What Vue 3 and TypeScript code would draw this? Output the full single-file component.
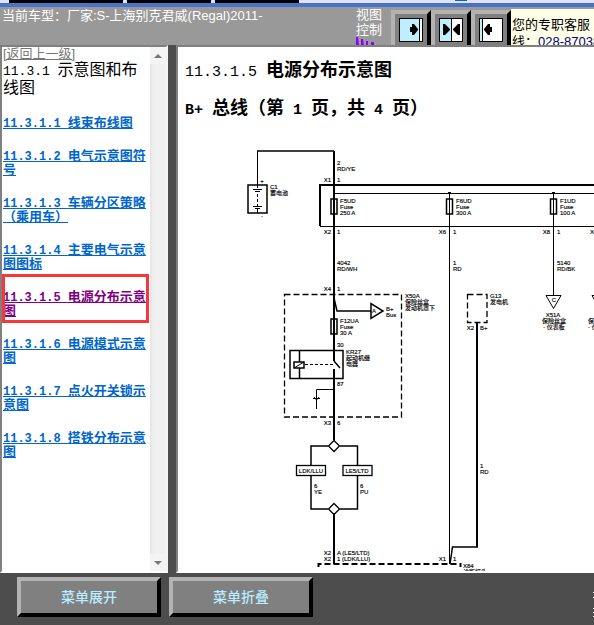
<script setup lang="ts">
interface NavItem {
  num: string
  title: string
  current?: boolean
}

interface Label {
  x: number
  y: number
  text: string
  anchor?: 'start' | 'middle' | 'end'
}

const navItems: NavItem[] = [
  { num: '11.3.1.1', title: '线束布线图' },
  { num: '11.3.1.2', title: '电气示意图符号' },
  { num: '11.3.1.3', title: '车辆分区策略（乘用车）' },
  { num: '11.3.1.4', title: '主要电气示意图图标' },
  { num: '11.3.1.5', title: '电源分布示意图', current: true },
  { num: '11.3.1.6', title: '电源模式示意图' },
  { num: '11.3.1.7', title: '点火开关锁示意图' },
  { num: '11.3.1.8', title: '搭铁分布示意图' },
]

const labels: Label[] = [
  { x: 262, y: 183, text: '+', anchor: 'middle' },
  { x: 262, y: 218, text: '-', anchor: 'middle' },
  { x: 270, y: 189, text: 'C1' },
  { x: 270, y: 195, text: '蓄电池' },
  { x: 337, y: 165, text: '2' },
  { x: 337, y: 171, text: 'RD/YE' },
  { x: 331, y: 182, text: 'X1', anchor: 'end' },
  { x: 337, y: 182, text: '1' },
  { x: 340, y: 203, text: 'F5UD' },
  { x: 340, y: 209, text: 'Fuse' },
  { x: 340, y: 215, text: '250 A' },
  { x: 456, y: 203, text: 'F6UD' },
  { x: 456, y: 209, text: 'Fuse' },
  { x: 456, y: 215, text: '300 A' },
  { x: 560, y: 203, text: 'F1UD' },
  { x: 560, y: 209, text: 'Fuse' },
  { x: 560, y: 215, text: '100 A' },
  { x: 331, y: 234, text: 'X2', anchor: 'end' },
  { x: 337, y: 234, text: '1' },
  { x: 446, y: 234, text: 'X6', anchor: 'end' },
  { x: 453, y: 234, text: '1' },
  { x: 550, y: 234, text: 'X8', anchor: 'end' },
  { x: 557, y: 234, text: '1' },
  { x: 590, y: 234, text: 'X3' },
  { x: 337, y: 265, text: '4042' },
  { x: 337, y: 271, text: 'RD/WH' },
  { x: 453, y: 265, text: '1' },
  { x: 453, y: 271, text: 'RD' },
  { x: 557, y: 265, text: '5140' },
  { x: 557, y: 271, text: 'RD/BK' },
  { x: 331, y: 291, text: 'X4', anchor: 'end' },
  { x: 337, y: 291, text: '1' },
  { x: 405, y: 298, text: 'X50A' },
  { x: 405, y: 304, text: '保险丝盒' },
  { x: 405, y: 310, text: '发动机罩下' },
  { x: 372, y: 313, text: 'A' },
  { x: 386, y: 311, text: 'B+' },
  { x: 386, y: 317, text: 'Bus' },
  { x: 340, y: 323, text: 'F12UA' },
  { x: 340, y: 329, text: 'Fuse' },
  { x: 340, y: 335, text: '30 A' },
  { x: 337, y: 347, text: '30' },
  { x: 346, y: 354, text: 'KR27' },
  { x: 346, y: 360, text: '起动机继' },
  { x: 346, y: 366, text: '电器' },
  { x: 337, y: 386, text: '87' },
  { x: 331, y: 425, text: 'X3', anchor: 'end' },
  { x: 337, y: 425, text: '6' },
  { x: 490, y: 298, text: 'G13' },
  { x: 490, y: 304, text: '发电机' },
  { x: 474, y: 330, text: 'X2', anchor: 'end' },
  { x: 480, y: 330, text: 'B+' },
  { x: 554, y: 302, text: 'C', anchor: 'middle' },
  { x: 553, y: 317, text: 'X51A', anchor: 'middle' },
  { x: 554, y: 323, text: '保险丝盒', anchor: 'middle' },
  { x: 554, y: 329, text: '- 仪表板', anchor: 'middle' },
  { x: 588, y: 323, text: '保险丝盒' },
  { x: 588, y: 329, text: '- 仪表板' },
  { x: 311, y: 473, text: 'LDK/LLU', anchor: 'middle' },
  { x: 357, y: 473, text: 'LE5/LTD', anchor: 'middle' },
  { x: 314, y: 488, text: '6' },
  { x: 314, y: 494, text: 'YE' },
  { x: 360, y: 488, text: '6' },
  { x: 360, y: 494, text: 'PU' },
  { x: 480, y: 468, text: '1' },
  { x: 480, y: 474, text: 'RD' },
  { x: 331, y: 555, text: 'X2', anchor: 'end' },
  { x: 331, y: 561, text: 'X2', anchor: 'end' },
  { x: 337, y: 555, text: 'A (LE5/LTD)' },
  { x: 337, y: 561, text: '1 (LDK/LLU)' },
  { x: 446, y: 561, text: 'X1', anchor: 'end' },
  { x: 453, y: 561, text: '1' },
  { x: 463, y: 568, text: 'X84' },
  { x: 463, y: 574, text: '诊断接头' },
]
</script>

<template>
  <div class="app">
    <div class="strip" aria-hidden="true">
      <span class="tab"></span><span class="tab short"></span><span class="tab short"></span>
      <span class="mark"></span>
    </div>

    <header class="top">
      <p class="model">当前车型：厂家:S-上海别克君威(Regal)2011-</p>
      <div class="view">
        <span>视图</span>
        <span>控制</span>
        <svg class="bars" width="26" height="9" viewBox="0 0 26 9" aria-hidden="true">
          <path d="M0 0h2l1 9H0zM5 2h2l1 7H5zM10 4h2v5h-2zM15 5h3v4h-3z" />
        </svg>
      </div>
      <div class="modes">
        <button type="button" class="bevel mode" aria-label="展开左侧">
          <svg width="24" height="24" viewBox="0 0 24 24">
            <rect x=".5" y=".5" width="23" height="23" fill="#fff" stroke="#000" />
            <rect x="1" y="1" width="19" height="22" fill="#bfefff" />
            <path d="M20 1h1v22h-1zM11 9h2V6h2l4 5v1l-4 5h-2v-3h-2z" />
          </svg>
        </button>
        <button type="button" class="bevel mode" aria-label="左右均分">
          <svg width="24" height="24" viewBox="0 0 24 24">
            <rect x=".5" y=".5" width="23" height="23" fill="#fff" stroke="#000" />
            <rect x="1" y="1" width="11" height="22" fill="#bfefff" />
            <path d="M12 1h1v22h-1zM4 6h2l5 5v1l-5 5H4zM21 6h-2l-5 5v1l5 5h2z" />
          </svg>
        </button>
        <button type="button" class="bevel mode" aria-label="收起左侧">
          <svg width="24" height="24" viewBox="0 0 24 24">
            <rect x=".5" y=".5" width="23" height="23" fill="#fff" stroke="#000" />
            <rect x="1" y="1" width="2" height="22" fill="#bfefff" />
            <path d="M3 1h1v22H3zM13 9h-2V6H9l-4 5v1l4 5h2v-3h2z" />
          </svg>
        </button>
      </div>
      <div class="service">
        <span>您的专职客服</span>
        <span>线：<b>028-87038</b></span>
      </div>
    </header>

    <div class="panes">
      <aside class="side">
        <nav class="menu">
          <a class="back" href="#">[返回上一级]</a>
          <h2 class="menu-title"><span class="num">11.3.1 </span>示意图和布线图</h2>
          <ul>
            <li v-for="item in navItems" :key="item.num" :class="{ current: item.current }">
              <a href="#"><span class="num">{{ item.num }}&nbsp;</span>{{ item.title }}</a>
            </li>
          </ul>
        </nav>
        <div class="scroll">
          <button type="button" aria-label="向上滚动">
            <svg width="8" height="4" viewBox="0 0 8 4"><path d="M0 4l4-4 4 4z" /></svg>
          </button>
          <button type="button" aria-label="向下滚动">
            <svg width="8" height="4" viewBox="0 0 8 4"><path d="M0 0l4 4 4-4z" /></svg>
          </button>
        </div>
      </aside>

      <main class="doc">
        <h1><span class="num plain">11.3.1.5 </span>电源分布示意图</h1>
        <h2><span class="num">B+ </span>总线（第<span class="num"> 1 </span>页，共<span class="num"> 4 </span>页）</h2>
        <svg class="diagram" width="416" height="431" viewBox="178 140 416 431" role="img" aria-label="电源分布示意图">
          <!-- battery -->
          <g class="thin">
            <path d="M257.500 188V151" />
            <path d="M253 189.500h9M255 191.500h5M253 206.500h9M255 208.500h5M257.500 208v5" />
            <path d="M257.500 194v12" stroke-dasharray="3 2" />
          </g>
          <path class="mid" d="M257 151H334M248 185h19v28h-19z" />

          <!-- fuse block and bus -->
          <path class="thick" d="M594 185H320V226" />
          <g class="thin">
            <path d="M320 226.500H594M334 193.500H594" />
            <path d="M449.500 193V564M553.500 193V295" />
            <path d="M546 295.500h15l-7.500 13zM592 295.500h15l-7.500 13z" />
          </g>
          <path d="M448 192h3v2h-3zM552 192h3v2h-3z" />
          <g class="mid">
            <rect x="331" y="199" width="6" height="15" />
            <rect x="446.500" y="199" width="6" height="15" />
            <rect x="550.500" y="199" width="6" height="15" />
          </g>

          <!-- main feed -->
          <path class="thick" d="M334 151V361M334 369V440M334 514V564" />
          <path class="mid" d="M334 298l3 13h34M371 303.500v15l12-7.500zM331 319h6v15h-6z" />

          <!-- underhood block with starter relay -->
          <path class="dash" d="M284.500 294.500H401.500V417H284.500z" />
          <g class="mid">
            <rect x="290" y="350.500" width="53" height="28" />
            <path d="M299.500 350v12M299.500 368v10M334 361l6 7" />
            <rect x="294" y="362" width="10" height="6" />
          </g>
          <g class="thin">
            <path d="M294 368l10-6" />
            <path d="M305 364.500h28" stroke-dasharray="3 2" />
            <path d="M334 389.500H316.500V409M313 398.500h7M314 397l2.500 3 2.500-3" />
          </g>

          <!-- parallel engine variants -->
          <path class="mid" d="M328 446H311V465M311 476V509H328M340 446H357.500V465M357.500 476V509H340" />
          <path class="box" d="M334 440.500l5.500 5.500-5.500 5.500-5.500-5.500zM334 503.500l5.500 5.500-5.500 5.500-5.500-5.500z" />
          <rect class="box" x="296.500" y="465.500" width="29" height="10" />
          <rect class="box" x="343" y="465.500" width="29" height="10" />

          <!-- generator feed -->
          <path class="dash" d="M467.500 294.500h19.500v28h-19.500z" />
          <path class="thick" d="M477 322V547" />
          <path class="mid" d="M478 547H452.500L450 564" />
          <path class="dash low" d="M318.500 567V564H460.500V567" />

          <text v-for="(label, i) in labels" :key="i" :x="label.x" :y="label.y" :text-anchor="label.anchor ?? 'start'">{{ label.text }}</text>
        </svg>
      </main>
    </div>

    <footer class="foot">
      <button type="button" class="bevel action">菜单展开</button>
      <button type="button" class="bevel action">菜单折叠</button>
      <svg class="edge" width="1" height="26" viewBox="0 0 1 26" aria-hidden="true">
        <path d="M0 0h1v1H0zM0 5h1v1H0zM0 16h1v1H0zM0 20h1v1H0zM0 24h1v1H0z" />
      </svg>
    </footer>
  </div>
</template>

<style>
body {
  margin: 0;
  background: #4d4d4d;
}
</style>

<style scoped>
.app {
  display: flex;
  flex-direction: column;
  height: 100vh;
  overflow: hidden;
  background: #4d4d4d;
  font-family: 'Liberation Sans', 'Noto Sans CJK SC', sans-serif;
  font-size: 13px;
}

h1,
h2,
p,
ul {
  margin: 0;
  padding: 0;
}

.num {
  font-family: 'Liberation Mono', monospace;
  line-height: 0;
  white-space: pre;
}

.strip {
  display: flex;
  flex: none;
  gap: 4px;
  height: 3px;
  padding-left: 9px;
  border-bottom: 4px solid #4a72c8;
  background: #dfe3f5;
}

.tab {
  width: 114px;
  background: #000;
}

.tab.short {
  width: 84px;
}

.mark {
  width: 12px;
  height: 1px;
  margin-left: 152px;
  background: #0a62c8;
}

.top {
  display: flex;
  flex: none;
  height: 38px;
  overflow: hidden;
  background: #999;
  color: #fff;
}

.model {
  flex: 1;
  padding-left: 2px;
  line-height: 18px;
  white-space: nowrap;
}

.view {
  display: flex;
  flex-direction: column;
  width: 35px;
  line-height: 15px;
}

.bars {
  fill: #80f;
  flex: none;
}

.modes {
  display: flex;
  padding-top: 3px;
}

.bevel {
  box-sizing: border-box;
  border: 4px solid;
  border-color: #b3b3b3 #000 #000 #b3b3b3;
  border-radius: 0;
  background: #808080;
}

.mode {
  display: flex;
  width: 40px;
  height: 40px;
  padding: 4px;
}

.mode svg {
  flex: none;
}

.service {
  display: flex;
  flex-direction: column;
  box-sizing: border-box;
  width: 83px;
  margin-top: 2px;
  padding: 7px 0 0 1px;
  overflow: hidden;
  background: #ffffe8;
  color: #000;
  line-height: 17px;
  white-space: nowrap;
}

.service b {
  color: #000080;
  font-weight: normal;
}

.panes {
  display: flex;
  flex: 1;
  gap: 8px;
  min-height: 0;
}

.side {
  display: flex;
  box-sizing: border-box;
  flex: none;
  width: 168px;
  border: 2px solid;
  border-color: #808080 #f4f4f4 #fff #808080;
  background: #fff;
}

.menu {
  flex: 1;
  padding-left: 1px;
}

.back {
  display: block;
  height: 14px;
  color: #777;
  line-height: 14px;
}

.menu-title {
  margin-bottom: 19px;
  font-size: 16px;
  font-weight: normal;
  line-height: 18px;
}

.menu-title .num {
  font-size: 13px;
}

.menu ul {
  display: flex;
  flex-direction: column;
  gap: 19px;
  list-style: none;
}

.menu li {
  position: relative;
  font-weight: bold;
  line-height: 14px;
}

.menu li a {
  color: #06c;
}

.menu li .num {
  font-size: 12px;
}

.menu li.current a {
  color: #800080;
}

.menu li.current::after {
  content: '';
  position: absolute;
  inset: -16px 1px -5px -1px;
  border: 3px solid #f83838;
  pointer-events: none;
}

.scroll {
  display: flex;
  flex: none;
  flex-direction: column;
  justify-content: space-between;
  width: 16px;
  background: linear-gradient(90deg, #e4e4e4, #f0f0f0 4px);
}

.scroll button {
  display: flex;
  align-items: center;
  justify-content: center;
  height: 17px;
  padding: 0;
  border: 0;
  background: #f4f4f4;
}

.scroll path {
  fill: #777;
}

.doc {
  flex: 1;
  min-width: 0;
  overflow: hidden;
  border: 2px solid;
  border-color: #808080 #fff #fff #808080;
  border-right: 0;
  background: #fff;
}

.doc h1,
.doc h2 {
  height: 38px;
  padding-left: 7px;
  font-size: 18px;
  line-height: 38px;
  white-space: nowrap;
}

.doc h1 {
  padding-top: 4px;
}

.doc .num {
  font-size: 15px;
}

.doc .plain {
  font-weight: normal;
}

.diagram {
  display: block;
  margin-top: 13px;
}

.diagram text {
  font-size: 6px;
  stroke: #000;
  stroke-width: 0.15px;
}

.thin,
.mid,
.thick,
.dash {
  fill: none;
  stroke: #000;
}

.mid {
  stroke-width: 1.5px;
}

.thick {
  stroke-width: 2px;
}

.dash {
  stroke-width: 1.3px;
  stroke-dasharray: 6 3;
}

.low {
  stroke-width: 2px;
}

.box {
  fill: #fff;
  stroke: #000;
  stroke-width: 1.3px;
}

.foot {
  display: flex;
  flex: none;
  gap: 8px;
  height: 48px;
  padding: 4px 0 0 17px;
}

.action {
  width: 144px;
  height: 40px;
  padding: 0 0 2px;
  color: #b8ecff;
  font-family: 'Noto Sans CJK SC', sans-serif;
  font-size: 14px;
  font-weight: 500;
}

.edge {
  margin: 15px 0 0 auto;
  fill: #fff;
}
</style>
